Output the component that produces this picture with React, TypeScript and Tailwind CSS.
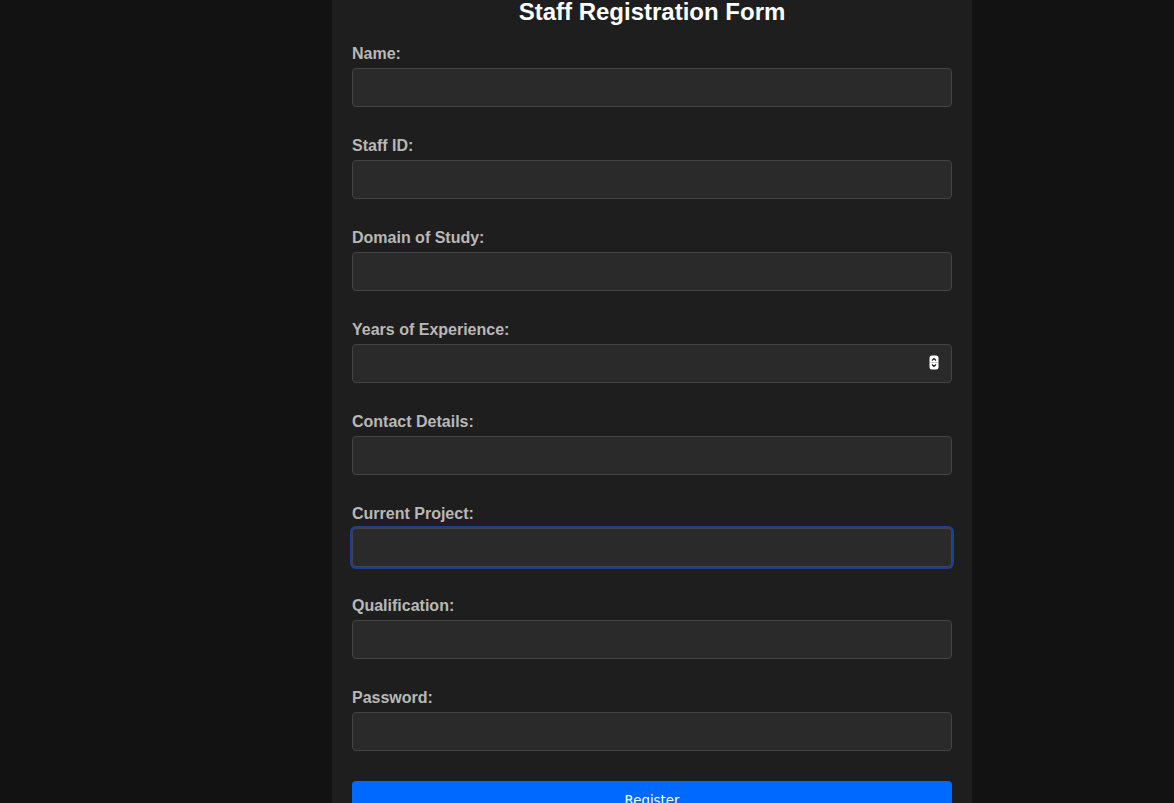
import React from "react";

const fields = [
  "Name:",
  "Staff ID:",
  "Domain of Study:",
  "Years of Experience:",
  "Contact Details:",
  "Current Project:",
  "Qualification:",
  "Password:",
];

function Spinner() {
  return (
    <svg
      className="absolute right-[13px] top-[11px]"
      width="10"
      height="15"
      viewBox="0 0 10 15"
    >
      <rect x="0.5" y="0.5" width="9" height="14" rx="2.5" fill="#ffffff" />
      <path d="M3 5.5 L5 3.5 L7 5.5" stroke="#111" strokeWidth="1.1" fill="none" />
      <path d="M3 9.5 L5 11.5 L7 9.5" stroke="#111" strokeWidth="1.1" fill="none" />
      <line x1="1.5" y1="7.5" x2="8.5" y2="7.5" stroke="#bbb" strokeWidth="0.8" />
    </svg>
  );
}

export default function App() {
  return (
    <div className="min-h-screen bg-[#121212] overflow-hidden" style={{ fontFamily: '"Liberation Sans", Arial, sans-serif' }}>
      <div className="ml-[332px] w-[640px] -mt-[22px] bg-[#1e1e1e] px-5 pt-5 pb-10">
        <h2 className="text-center text-[24px] font-bold leading-[28px] text-white mb-[19px]">
          Staff Registration Form
        </h2>
        <form className="flex flex-col gap-[30px]" onSubmit={(e) => e.preventDefault()}>
          {fields.map((f, i) => (
            <div key={f} className="flex flex-col">
              <label className="text-[16px] font-bold leading-[18px] text-[#b8b8b8] mb-[5px]">{f}</label>
              <div className="relative">
                <div
                  className={
                    i === 5
                      ? "h-[39px] w-full rounded-[4px] border border-[#444444] bg-[#2a2a2a] ring-2 ring-[#1b3f96]"
                      : "h-[39px] w-full rounded-[4px] border border-[#444444] bg-[#2a2a2a]"
                  }
                />
                {i === 3 && <Spinner />}
              </div>
            </div>
          ))}
          <button
            type="submit"
            className="h-[40px] w-full rounded-[4px] bg-[#0069ff] text-white text-[13.33px]"
            style={{ fontFamily: '"DejaVu Sans", "Liberation Sans", sans-serif' }}
          >
            Register
          </button>
        </form>
      </div>
    </div>
  );
}
